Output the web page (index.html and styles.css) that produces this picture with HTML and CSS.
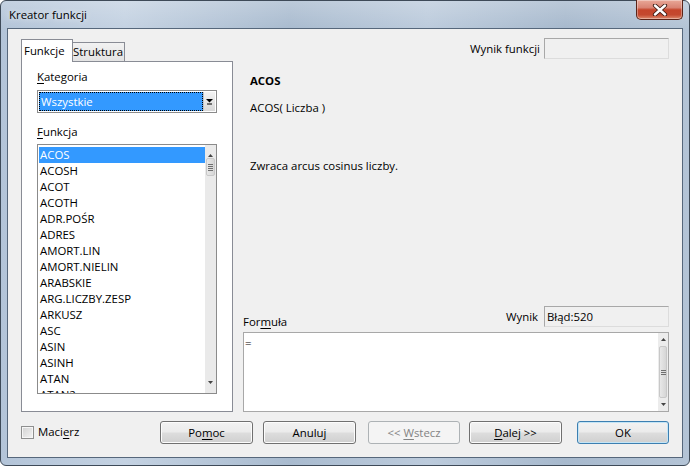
FILE: index.html
```html
<!DOCTYPE html>
<html lang="pl">
<head>
    <meta charset="UTF-8">
    <title>Kreator funkcji</title>
    <link rel="stylesheet" href="styles.css">
</head>
<body>
    <div class="window">
        <!-- Title bar -->
        <div class="titlebar">
            <span class="title">Kreator funkcji</span>
            <div class="close-btn">
                <svg width="16" height="12" viewBox="0 0 16 12">
                    <path d="M3 1.5 L13 10.5 M13 1.5 L3 10.5" stroke="#3b1a12" stroke-width="4.2" stroke-linecap="round"/>
                    <path d="M3 1.5 L13 10.5 M13 1.5 L3 10.5" stroke="#ffffff" stroke-width="2.4" stroke-linecap="round"/>
                </svg>
            </div>
        </div>

        <div class="client">
            <div class="main">
                <!-- Left: tabs -->
                <div class="left">
                    <div class="tabs">
                        <div class="tab active">Funkcje</div>
                        <div class="tab">Struktura</div>
                    </div>
                    <div class="tab-page">
                        <div class="label"><u>K</u>ategoria</div>
                        <div class="combo">
                            <div class="combo-value">Wszystkie</div>
                            <div class="combo-btn">
                                <svg width="7" height="7" viewBox="0 0 7 7">
                                    <polygon points="0,1 7,1 3.5,4.5" fill="#000"/>
                                    <rect x="1" y="5.5" width="5" height="1" fill="#000"/>
                                </svg>
                            </div>
                        </div>
                        <div class="label label-func"><u>F</u>unkcja</div>
                        <div class="listbox">
                            <div class="items">
                                <div class="item sel">ACOS</div>
                                <div class="item">ACOSH</div>
                                <div class="item">ACOT</div>
                                <div class="item">ACOTH</div>
                                <div class="item">ADR.POŚR</div>
                                <div class="item">ADRES</div>
                                <div class="item">AMORT.LIN</div>
                                <div class="item">AMORT.NIELIN</div>
                                <div class="item">ARABSKIE</div>
                                <div class="item">ARG.LICZBY.ZESP</div>
                                <div class="item">ARKUSZ</div>
                                <div class="item">ASC</div>
                                <div class="item">ASIN</div>
                                <div class="item">ASINH</div>
                                <div class="item">ATAN</div>
                                <div class="item">ATAN2</div>
                            </div>
                            <div class="vscroll">
                                <div class="sb-arrow">
                                    <svg width="5" height="3" viewBox="0 0 5 3"><polygon points="0,3 5,3 2.5,0" fill="#444"/></svg>
                                </div>
                                <div class="sb-thumb short"><i></i><i></i><i></i><i></i></div>
                                <div class="sb-track"></div>
                                <div class="sb-arrow down">
                                    <svg width="5" height="3" viewBox="0 0 5 3"><polygon points="0,0 5,0 2.5,3" fill="#444"/></svg>
                                </div>
                            </div>
                        </div>
                    </div>
                </div>

                <!-- Right: description and formula -->
                <div class="right">
                    <div class="result-row">
                        <span>Wynik funkcji</span>
                        <div class="field"></div>
                    </div>
                    <div class="desc">
                        <div class="fname">ACOS</div>
                        <div class="fsig">ACOS( Liczba )</div>
                        <div class="ftext">Zwraca arcus cosinus liczby.</div>
                    </div>
                    <div class="spacer"></div>
                    <div class="formula-head">
                        <span class="formula-label">For<u>m</u>uła</span>
                        <div class="result-row small">
                            <span>Wynik</span>
                            <div class="field">Błąd:520</div>
                        </div>
                    </div>
                    <div class="formula-box">
                        <div class="formula-text">=</div>
                        <div class="vscroll">
                            <div class="sb-arrow">
                                <svg width="5" height="3" viewBox="0 0 5 3"><polygon points="0,3 5,3 2.5,0" fill="#444"/></svg>
                            </div>
                            <div class="sb-thumb long"><i></i><i></i><i></i></div>
                            <div class="sb-track"></div>
                            <div class="sb-arrow down">
                                <svg width="5" height="3" viewBox="0 0 5 3"><polygon points="0,0 5,0 2.5,3" fill="#444"/></svg>
                            </div>
                        </div>
                    </div>
                </div>
            </div>

            <!-- Bottom buttons -->
            <div class="bottom">
                <label class="check"><span class="checkbox"></span><span>Maci<u>e</u>rz</span></label>
                <div class="buttons">
                    <div class="btn btn-help">Po<u>m</u>oc</div>
                    <div class="btn btn-cancel">Anuluj</div>
                    <div class="btn btn-back disabled">&lt;&lt; <u>W</u>stecz</div>
                    <div class="btn btn-next"><u>D</u>alej &gt;&gt;</div>
                    <div class="btn btn-ok">OK</div>
                </div>
            </div>
        </div>
    </div>
</body>
</html>
```

FILE: styles.css
```css
body {
    margin: 0;
    font-family: "Open Sans", "Liberation Sans", sans-serif;
    font-size: 11.4px;
    color: #000;
    background: #fff;
}
u {
    text-decoration: underline;
    text-underline-offset: 2px;
}
/* Window frame */
.window {
    width: 690px;
    height: 466px;
    box-sizing: border-box;
    border: 1px solid #3e4a58;
    border-radius: 6px;
    padding: 0 6px 7px;
    display: flex;
    flex-direction: column;
    background:
        linear-gradient(180deg, rgba(255,255,255,0.22), rgba(255,255,255,0) 28px),
        linear-gradient(90deg, #b3c4d8 0%, #c4d2e2 18%, #a9bbcf 42%, #bccbdc 62%, #a7b9cd 82%, #b4c4d6 100%);
}
.titlebar {
    height: 27px;
    display: flex;
    align-items: flex-start;
}
.title {
    margin: 6px 0 0 2px;
    line-height: 16px;
    text-shadow: 0 0 6px rgba(255,255,255,0.9);
}
.close-btn {
    margin-left: auto;
    margin-top: -1px;
    width: 47px;
    height: 20px;
    box-sizing: border-box;
    border: 1px solid #5b2418;
    border-top: none;
    border-radius: 0 0 5px 5px;
    background: linear-gradient(180deg, #e9a898 0%, #d98373 40%, #c5452b 52%, #c4492f 78%, #dd8a6d 100%);
    box-shadow: inset 0 0 0 1px rgba(255,255,255,0.35);
    display: flex;
    align-items: center;
    justify-content: center;
}
/* Client area */
.client {
    flex: 1;
    border: 1px solid #56677b;
    background: #f0f0f0;
    padding: 9px 13px 0;
    display: flex;
    flex-direction: column;
}
.main {
    display: grid;
    grid-template-columns: 212px 426px;
    column-gap: 10px;
}
.left {
    padding-top: 1px;
}
.tabs {
    display: flex;
    align-items: flex-end;
    height: 22px;
}
.tab {
    box-sizing: border-box;
    width: 53px;
    height: 19px;
    margin-left: -1px;
    border: 1px solid #898c95;
    border-bottom: none;
    background: linear-gradient(180deg, #f2f2f2, #e3e3e3);
    padding-left: 0;
    line-height: 18px;
    white-space: nowrap;
}
.tab.active {
    position: relative;
    z-index: 1;
    width: 52px;
    height: 23px;
    margin-left: 0;
    margin-bottom: -1px;
    background: #fff;
    padding-left: 2px;
    line-height: 22px;
}
.tab-page {
    height: 351px;
    box-sizing: border-box;
    border: 1px solid #898c95;
    background: #fff;
    padding: 7px 15px 0;
}
.label {
    line-height: 16px;
}
.label-func {
    margin-top: 11px;
}
.combo {
    margin-top: 5px;
    height: 23px;
    box-sizing: border-box;
    border: 1px solid #8b8b8b;
    padding: 1px;
    background: #fff;
    display: flex;
}
.combo-value {
    flex: 1;
    background: #3399ff;
    color: #fff;
    border: 1px dotted #000;
    line-height: 17px;
    padding-left: 1px;
}
.combo-btn {
    width: 11px;
    background: linear-gradient(180deg, #f3f3f3, #d8d8d8);
    border-left: 1px solid #c4c4c4;
    display: flex;
    align-items: center;
    justify-content: center;
}
.listbox {
    margin-top: 4px;
    height: 250px;
    box-sizing: border-box;
    border: 1px solid #8b8b8b;
    display: flex;
    overflow: hidden;
}
.items {
    flex: 1;
    padding: 2px 0 0 1px;
    overflow: hidden;
}
.item {
    line-height: 16px;
    height: 16px;
    padding-left: 1px;
    white-space: nowrap;
}
.item.sel {
    background: #3399ff;
    color: #fff;
}
/* Scrollbars */
.vscroll {
    width: 11px;
    background: #eaeaea;
    display: flex;
    flex-direction: column;
}
.sb-arrow {
    height: 12px;
    display: flex;
    align-items: flex-end;
    justify-content: center;
    padding-bottom: 1px;
}
.sb-arrow.down {
    align-items: flex-start;
    padding: 1px 0 0;
}
.sb-thumb {
    box-sizing: border-box;
    margin: 0 1px;
    background: linear-gradient(90deg, #e8e8e8, #d6d6d6);
    border: 1px solid #c8c8c8;
    border-radius: 2px;
    display: flex;
    flex-direction: column;
    align-items: center;
    justify-content: center;
    gap: 1px;
}
.sb-thumb i {
    display: block;
    width: 5px;
    height: 1px;
    background: #6f6f6f;
}
.sb-thumb.short {
    height: 18px;
}
.sb-thumb.long {
    height: 52px;
}
.sb-track {
    flex: 1;
}
/* Right column */
.right {
    display: flex;
    flex-direction: column;
}
.result-row {
    display: flex;
    justify-content: flex-end;
    align-items: center;
    gap: 4px;
    height: 21px;
}
.field {
    width: 125px;
    height: 21px;
    box-sizing: border-box;
    border: 1px solid #a8a8a8;
    border-right-color: #dcdcdc;
    border-bottom-color: #dcdcdc;
    background: #f0f0f0;
    line-height: 19px;
    padding-left: 2px;
}
.desc {
    padding-left: 7px;
    margin-top: 14px;
    line-height: 16px;
}
.fname {
    font-weight: bold;
}
.fsig {
    margin-top: 11px;
}
.ftext {
    margin-top: 42px;
}
.spacer {
    flex: 1;
}
.formula-head {
    display: flex;
    justify-content: space-between;
    align-items: flex-end;
}
.formula-label {
    line-height: 16px;
    margin-bottom: 2px;
}
.result-row.small {
    gap: 6px;
    margin-bottom: 5px;
}
.formula-box {
    height: 80px;
    box-sizing: border-box;
    border: 1px solid #a8a8a8;
    background: #fff;
    display: flex;
}
.formula-text {
    flex: 1;
    padding: 2px 1px;
    line-height: 16px;
}
.formula-box .vscroll {
    width: 10px;
    background: #ececec;
}
.formula-box .sb-arrow {
    height: 8px;
}
.formula-box .sb-thumb.long {
    margin-top: 4px;
}
/* Bottom row */
.bottom {
    margin-top: 9px;
    height: 23px;
    display: flex;
    align-items: center;
}
.check {
    display: flex;
    align-items: center;
    gap: 4px;
    line-height: 16px;
    margin-bottom: 1px;
}
.checkbox {
    width: 13px;
    height: 13px;
    box-sizing: border-box;
    border: 1px solid #8e8f8f;
    background: linear-gradient(135deg, #d2d2d2, #f4f4f4);
    box-shadow: inset 0 0 0 1px #f6f6f6;
}
.buttons {
    margin-left: auto;
    display: flex;
}
.btn {
    height: 23px;
    box-sizing: border-box;
    border: 1px solid #707070;
    border-radius: 3px;
    background: linear-gradient(180deg, #f2f2f2 0%, #ebebeb 48%, #dddddd 52%, #cfcfcf 100%);
    box-shadow: inset 0 0 0 1px #fcfcfc;
    text-align: center;
    line-height: 21px;
}
.btn-help { width: 93px; }
.btn-cancel { width: 93px; margin-left: 10px; }
.btn-back { width: 92px; margin-left: 12px; }
.btn-next { width: 93px; margin-left: 9px; }
.btn-ok {
    width: 92px;
    margin-left: 15px;
    border-color: #3c7fb1;
    box-shadow: inset 0 0 0 1px #c4e5f6;
}
.btn.disabled {
    border-color: #adb2b5;
    background: #f4f4f4;
    box-shadow: none;
    color: #838383;
}
```
